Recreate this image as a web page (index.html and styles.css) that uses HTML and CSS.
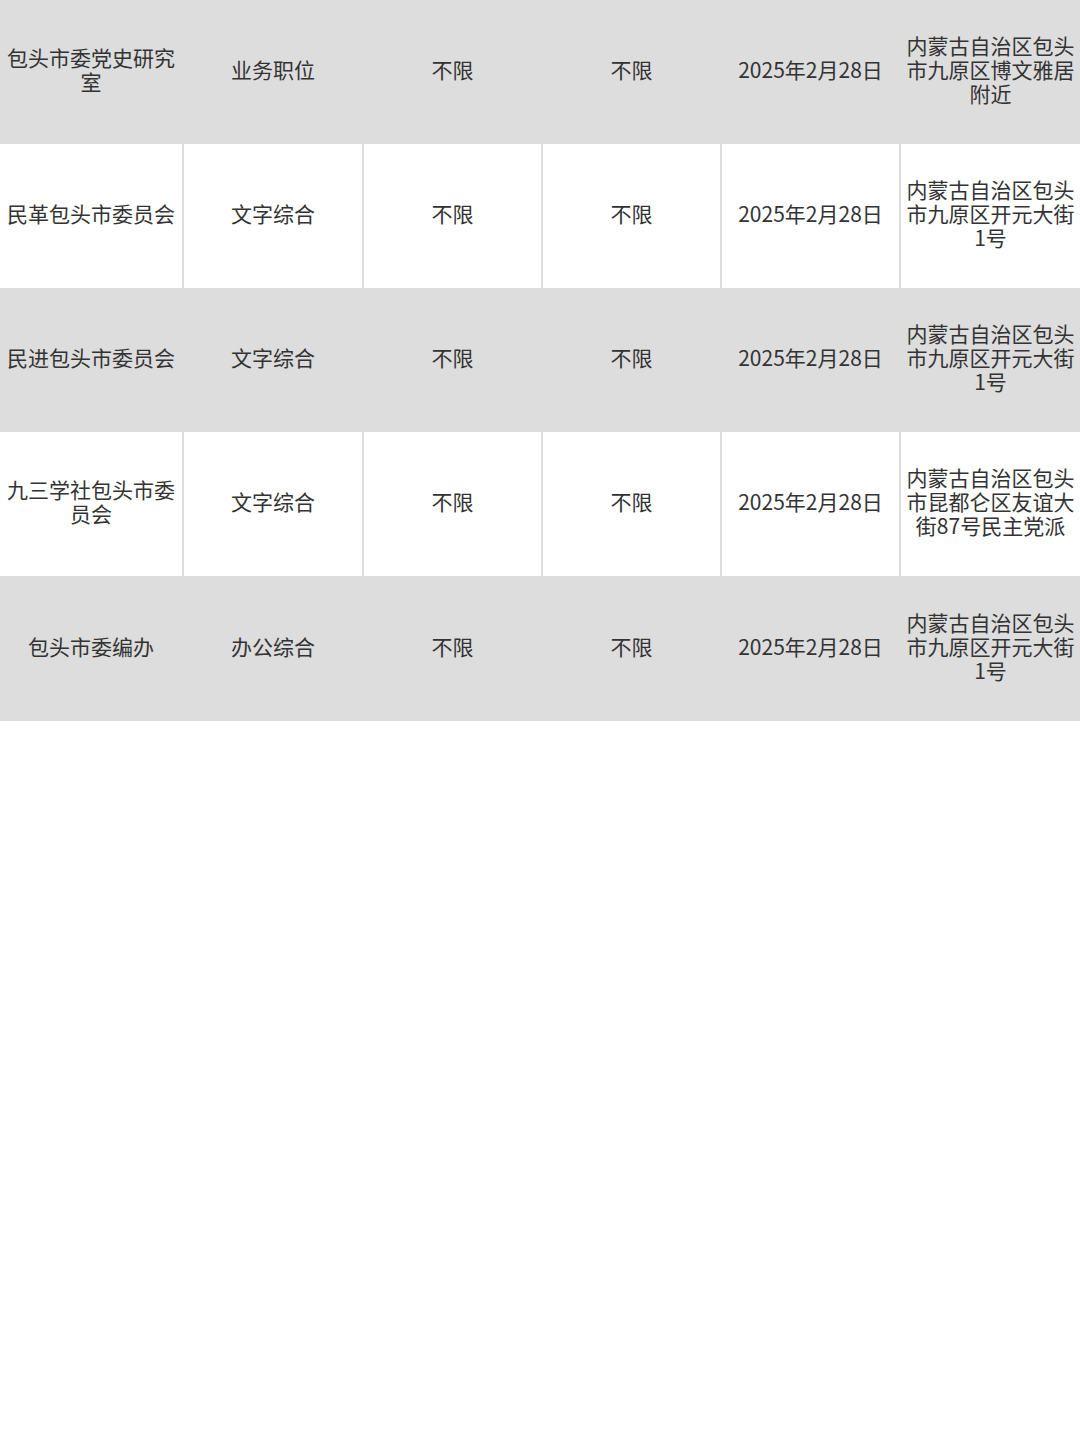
FILE: index.html
```html
<!DOCTYPE html>
<html lang="zh">
<head>
<meta charset="utf-8">
<title>职位表</title>
<link rel="stylesheet" href="styles.css">
</head>
<body>
<div class="table">
  <div class="row row-gray">
    <div class="cell">包头市委党史研究室</div>
    <div class="cell">业务职位</div>
    <div class="cell">不限</div>
    <div class="cell">不限</div>
    <div class="cell">2025年2月28日</div>
    <div class="cell">内蒙古自治区包头市九原区博文雅居附近</div>
  </div>
  <div class="row row-white">
    <div class="cell">民革包头市委员会</div>
    <div class="cell">文字综合</div>
    <div class="cell">不限</div>
    <div class="cell">不限</div>
    <div class="cell">2025年2月28日</div>
    <div class="cell">内蒙古自治区包头市九原区开元大街1号</div>
  </div>
  <div class="row row-gray">
    <div class="cell">民进包头市委员会</div>
    <div class="cell">文字综合</div>
    <div class="cell">不限</div>
    <div class="cell">不限</div>
    <div class="cell">2025年2月28日</div>
    <div class="cell">内蒙古自治区包头市九原区开元大街1号</div>
  </div>
  <div class="row row-white">
    <div class="cell">九三学社包头市委员会</div>
    <div class="cell">文字综合</div>
    <div class="cell">不限</div>
    <div class="cell">不限</div>
    <div class="cell">2025年2月28日</div>
    <div class="cell">内蒙古自治区包头市昆都仑区友谊大街87号民主党派</div>
  </div>
  <div class="row row-gray row-last">
    <div class="cell">包头市委编办</div>
    <div class="cell">办公综合</div>
    <div class="cell">不限</div>
    <div class="cell">不限</div>
    <div class="cell">2025年2月28日</div>
    <div class="cell">内蒙古自治区包头市九原区开元大街1号</div>
  </div>
</div>
</body>
</html>
```
FILE: styles.css
```css
html, body {
  margin: 0;
  padding: 0;
  background: #ffffff;
}
body {
  font-family: "Noto Sans CJK SC", "Noto Sans", sans-serif;
  color: #333333;
  font-size: 21px;
  line-height: 24px;
}
.table {
  width: 1080px;
  display: flex;
  flex-direction: column;
}
.row {
  display: grid;
  grid-template-columns: 182px 178px 177px 177px 177px 179px;
  column-gap: 2px;
  height: 144px;
  background: #dddddd;
}
.row-last {
  height: 145px;
}
.cell {
  display: flex;
  align-items: center;
  justify-content: center;
  text-align: center;
  padding: 0 4px 6px 4px;
  word-break: break-all;
}
.row-white .cell {
  background: #ffffff;
}
```
